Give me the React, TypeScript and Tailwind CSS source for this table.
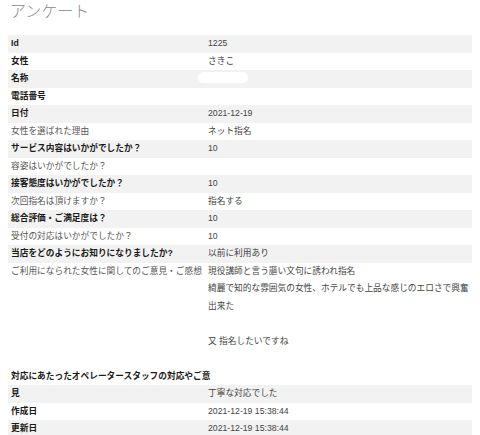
import React from "react";

type Row = { label: string; value?: string; bold?: boolean; redacted?: boolean };

const ROWS: Row[] = [
  { label: "Id", value: "1225", bold: true },
  { label: "女性", value: "さきこ", bold: true },
  { label: "名称", redacted: true, bold: true },
  { label: "電話番号", bold: true },
  { label: "日付", value: "2021-12-19", bold: true },
  { label: "女性を選ばれた理由", value: "ネット指名" },
  { label: "サービス内容はいかがでしたか？", value: "10", bold: true },
  { label: "容姿はいかがでしたか？" },
  { label: "接客態度はいかがでしたか？", value: "10", bold: true },
  { label: "次回指名は頂けますか？", value: "指名する" },
  { label: "総合評価・ご満足度は？", value: "10", bold: true },
  { label: "受付の対応はいかがでしたか？", value: "10" },
  { label: "当店をどのようにお知りになりましたか?", value: "以前に利用あり", bold: true },
];

const COMMENT = [
  "現役講師と言う謳い文句に誘われ指名",
  "綺麗で知的な雰囲気の女性、ホテルでも上品な感じのエロさで興奮",
  "出来た",
  "",
  "又 指名したいですね",
  "",
];

function Line({ row, gray }: { row: Row; gray: boolean }) {
  return (
    <div
      className={`grid h-[17.5px] grid-cols-[197px_1fr] leading-[17.5px] ${
        gray ? "bg-[#f2f2f2]" : "bg-white"
      }`}
    >
      <div
        className={`whitespace-nowrap px-[3px] ${
          row.bold ? "font-bold text-[#1a1a1a]" : "text-[#555]"
        }`}
      >
        {row.label}
      </div>
      <div className="whitespace-nowrap px-[3px] text-[#444]">
        {row.redacted ? (
          <span className="relative top-[2px] -ml-[10px] inline-block h-[11px] w-[50px] rounded-full bg-white" />
        ) : (
          row.value
        )}
      </div>
    </div>
  );
}

export default function App() {
  return (
    <div className="min-h-[435px] bg-white px-[8px] font-['Liberation_Sans','Noto_Sans_CJK_JP',sans-serif] text-[8.7px]">
      <h1 className="h-[35px] pl-[2px] pt-[4px] text-[16px] font-light leading-[16px] text-[#888]">
        アンケート
      </h1>

      {ROWS.map((row, i) => (
        <Line key={row.label} row={row} gray={i % 2 === 0} />
      ))}

      {/* comment row */}
      <div className="grid grid-cols-[197px_1fr] bg-white leading-[17.5px]">
        <div className="whitespace-nowrap px-[3px] text-[#555]">
          ご利用になられた女性に関してのご意見・ご感想
        </div>
        <div className="px-[3px] text-[#444]">
          {COMMENT.map((t, i) => (
            <div key={i} className="h-[17.5px] whitespace-nowrap">
              {t}
            </div>
          ))}
        </div>
      </div>

      {/* long label wraps onto the next line */}
      <div className="h-[17.5px] whitespace-nowrap px-[3px] font-bold leading-[17.5px] text-[#1a1a1a]">
        対応にあたったオペレータースタッフの対応やご意
      </div>
      <Line row={{ label: "見", value: "丁寧な対応でした", bold: true }} gray />
      <Line row={{ label: "作成日", value: "2021-12-19 15:38:44", bold: true }} gray={false} />
      <Line row={{ label: "更新日", value: "2021-12-19 15:38:44", bold: true }} gray />
    </div>
  );
}
